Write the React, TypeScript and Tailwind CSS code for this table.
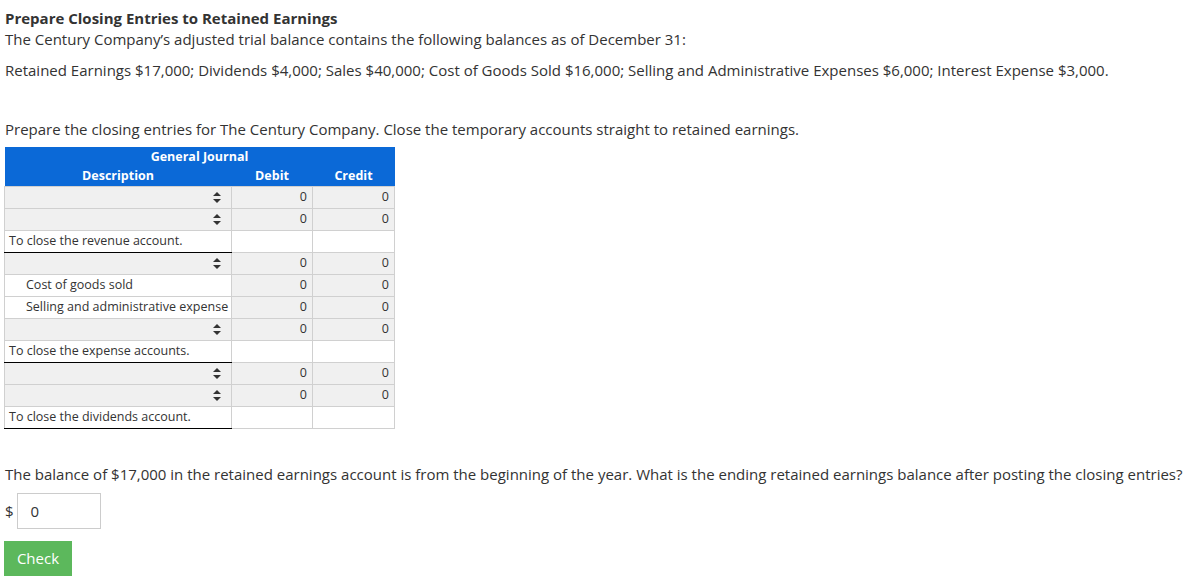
import React from "react";

const Arrows = () => (
  <svg width="8" height="11" viewBox="0 0 8 11" className="inline-block">
    <path d="M4 0 L8 4 L0 4 Z" fill="#333" />
    <path d="M0 7 L8 7 L4 11 Z" fill="#333" />
  </svg>
);

type Row =
  | { kind: "select" }
  | { kind: "account"; label: string }
  | { kind: "note"; label: string };

const rows: Row[] = [
  { kind: "select" },
  { kind: "select" },
  { kind: "note", label: "To close the revenue account." },
  { kind: "select" },
  { kind: "account", label: "Cost of goods sold" },
  { kind: "account", label: "Selling and administrative expense" },
  { kind: "select" },
  { kind: "note", label: "To close the expense accounts." },
  { kind: "select" },
  { kind: "select" },
  { kind: "note", label: "To close the dividends account." },
];

export default function App() {
  return (
    <div
      className="pl-[5px] pt-[8px] text-[#333] text-[15px]"
      style={{ fontFamily: '"Open Sans", "Noto Sans", sans-serif' }}
    >
      <div className="font-bold leading-[21px]">Prepare Closing Entries to Retained Earnings</div>
      <div className="leading-[21px]">
        The Century Company’s adjusted trial balance contains the following balances as of December 31:
      </div>
      <div className="mt-[10px] leading-[21px]">
        Retained Earnings $17,000; Dividends $4,000; Sales $40,000; Cost of Goods Sold $16,000; Selling and
        Administrative Expenses $6,000; Interest Expense $3,000.
      </div>
      <div className="mt-[38px] leading-[21px]">
        Prepare the closing entries for The Century Company. Close the temporary accounts straight to retained earnings.
      </div>
      <table className="mt-[7px] -ml-px border-collapse text-[12.5px] table-fixed w-[390px]">
        <colgroup>
          <col className="w-[227px]" />
          <col className="w-[81px]" />
          <col className="w-[82px]" />
        </colgroup>
        <thead>
          <tr className="bg-[#0b69d7] text-white font-bold">
            <th colSpan={3} className="h-[19px] p-0 leading-[19px] text-center">
              General Journal
            </th>
          </tr>
          <tr className="bg-[#0b69d7] text-white font-bold">
            <th className="h-[20px] p-0 leading-[20px] text-center">Description</th>
            <th className="p-0 leading-[20px] text-center">Debit</th>
            <th className="p-0 leading-[20px] text-center">Credit</th>
          </tr>
        </thead>
        <tbody>
          {rows.map((r, i) => {
            if (r.kind === "select") {
              return (
                <tr key={i} className="h-[22px]">
                  <td className="bg-[#f0f0f0] border border-[#d0d0d0] p-0 pr-[10px] text-right align-middle">
                    <Arrows />
                  </td>
                  <td className="bg-[#f0f0f0] border border-[#d0d0d0] p-0 pr-[5px] text-right">0</td>
                  <td className="bg-[#f0f0f0] border border-[#d0d0d0] p-0 pr-[5px] text-right">0</td>
                </tr>
              );
            }
            if (r.kind === "account") {
              return (
                <tr key={i} className="h-[22px]">
                  <td className="bg-white border border-[#d0d0d0] p-0 pl-[21px] text-left whitespace-nowrap">
                    {r.label}
                  </td>
                  <td className="bg-[#f0f0f0] border border-[#d0d0d0] p-0 pr-[5px] text-right">0</td>
                  <td className="bg-[#f0f0f0] border border-[#d0d0d0] p-0 pr-[5px] text-right">0</td>
                </tr>
              );
            }
            return (
              <tr key={i} className="h-[22px]">
                <td className="bg-white border border-[#d0d0d0] border-b-black p-0 pl-[4px] text-left">
                  {r.label}
                </td>
                <td className="bg-white border border-[#d0d0d0]" />
                <td className="bg-white border border-[#d0d0d0]" />
              </tr>
            );
          })}
        </tbody>
      </table>
      <div className="mt-[35px] leading-[21px]">
        The balance of $17,000 in the retained earnings account is from the beginning of the year. What is the ending
        retained earnings balance after posting the closing entries?
      </div>
      <div className="mt-[8px] flex items-center">
        <span className="mr-[3px]">$</span>
        <div className="w-[84px] h-[36px] border border-[#ccc] pl-[13px] flex items-center">0</div>
      </div>
      <button className="mt-[12px] -ml-px w-[68px] h-[35px] bg-[#5cb85c] text-white text-[15px]">Check</button>
    </div>
  );
}
